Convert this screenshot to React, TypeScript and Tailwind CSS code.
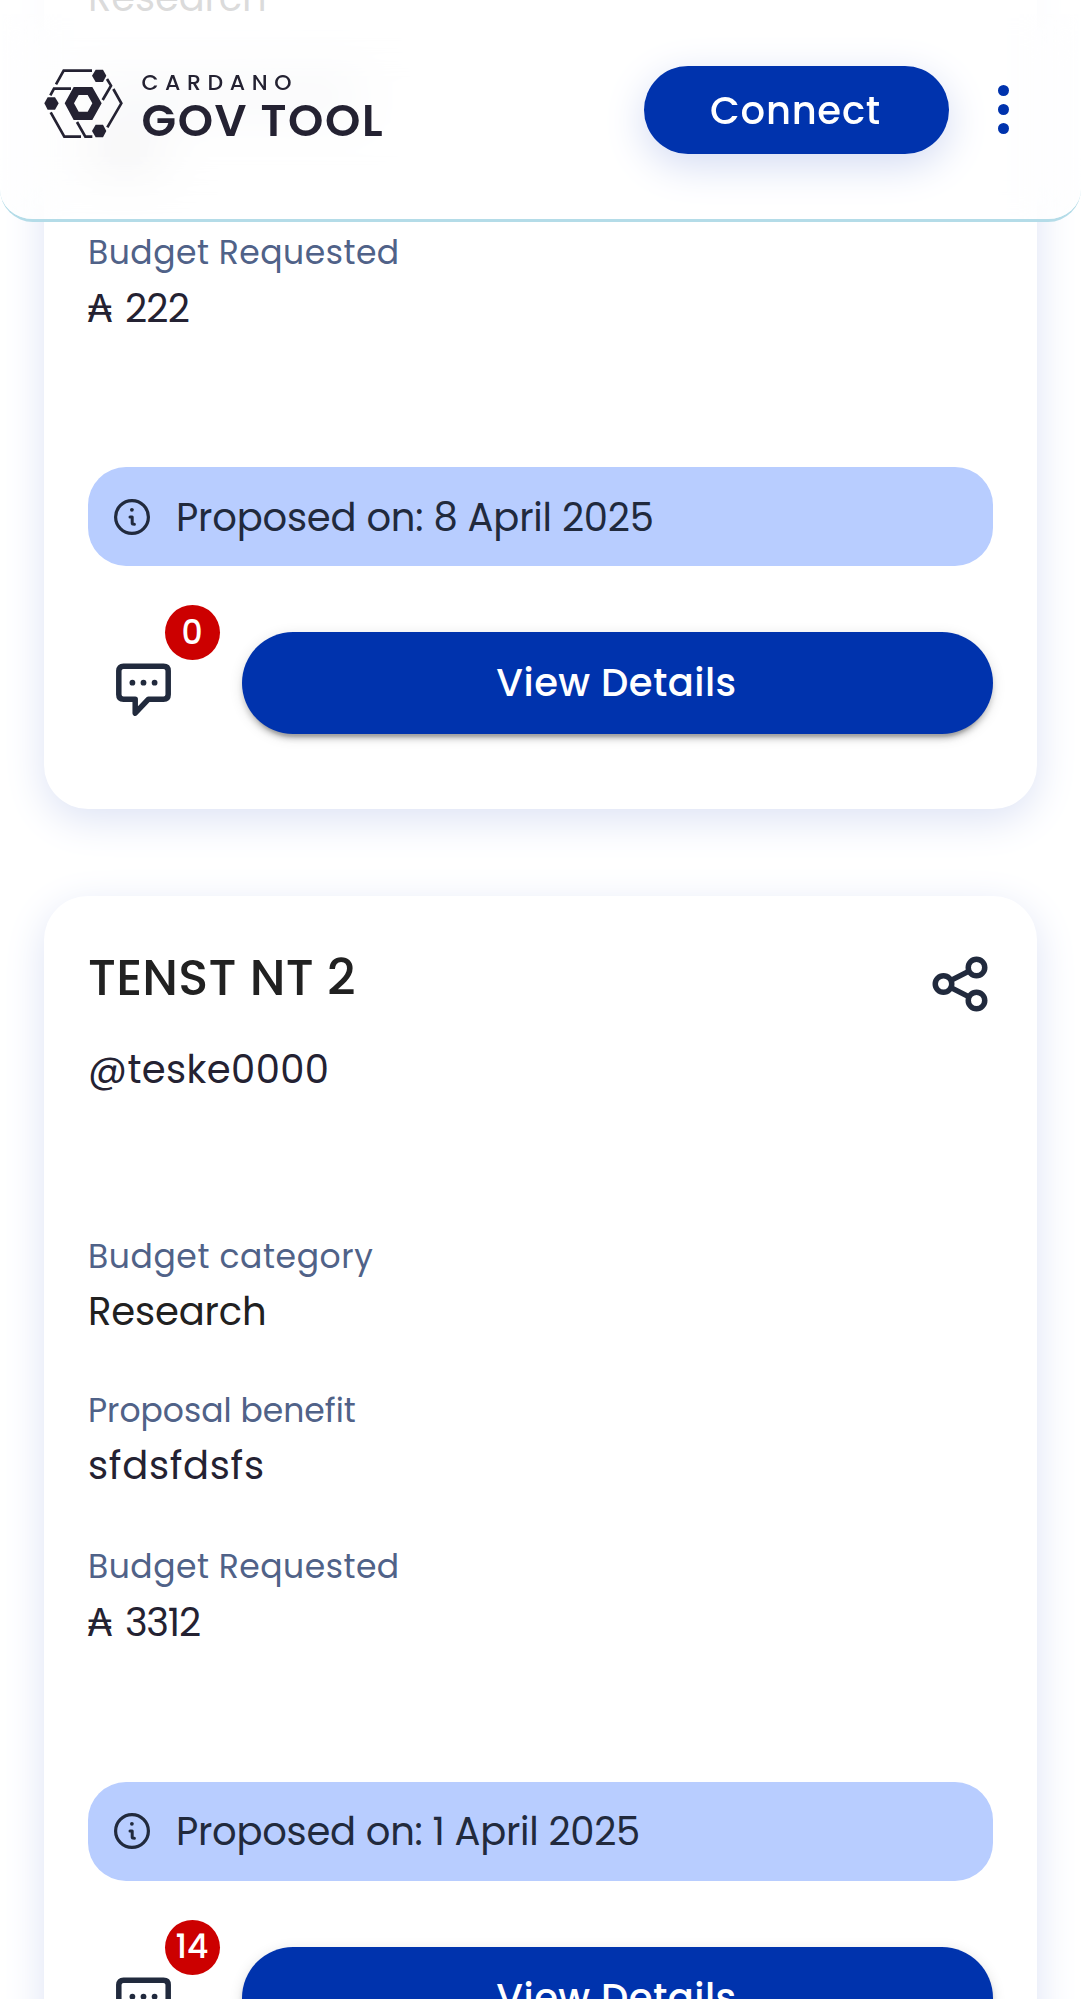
import type { ReactNode } from "react";

function LogoMark() {
  return (
    <svg width="79" height="69" viewBox="132 205 237 207" fill="none" stroke="#242232" strokeWidth="8">
      <path d="M168 251 191 210H276" />
      <path d="M321 235 333 255 308 298" />
      <path d="M340 265 364 308 322 380" />
      <path d="M151 284 162 264H213" />
      <path d="M152 335 193 408H243" />
      <path d="M231 364 256 408H277" />
      <g fill="#242232" stroke="none">
        <path d="M276 225 287 207H309L319 225 309 244H287Z" />
        <path d="M133 308 143 290H165L176 308 165 327H143Z" />
        <path d="M276 391 287 372H309L319 391 309 410H287Z" />
        <path
          fillRule="evenodd"
          d="M194 308 221 259H277L305 308 277 358H221ZM222 308 236 333H263L277 308 263 283H236Z"
        />
      </g>
    </svg>
  );
}

function InfoIcon() {
  return (
    <svg className="shrink-0" width="36" height="36" viewBox="0 0 36 36" fill="none" stroke="#212a3d">
      <circle cx="18" cy="18" r="16.4" strokeWidth="3.2" />
      <path d="M16 17.9H18.2V24.2Q18.2 25.2 20.4 25.2" strokeWidth="3" strokeLinecap="round" strokeLinejoin="round" />
      <circle cx="17.9" cy="10.8" r="1.9" fill="#212a3d" stroke="none" />
    </svg>
  );
}

function ChatIcon() {
  return (
    <svg width="55" height="54" viewBox="0 0 55 54" fill="none" stroke="#212a3d" strokeWidth="5.5" strokeLinejoin="round">
      <path d="M7.5 3.2H47.5Q52.2 3.2 52.2 7.8V31.5Q52.2 36.2 47.5 36.2H32.5L19.2 50.2V36.2H7.5Q2.8 36.2 2.8 31.5V7.8Q2.8 3.2 7.5 3.2Z" />
      <g fill="#212a3d" stroke="none">
        <circle cx="16.4" cy="19.7" r="2.9" />
        <circle cx="27.5" cy="19.7" r="2.9" />
        <circle cx="38.6" cy="19.7" r="2.9" />
      </g>
    </svg>
  );
}

function ShareIcon() {
  return (
    <svg width="66" height="66" viewBox="0 0 24 24" fill="none" stroke="#212a3d" strokeWidth="2">
      <circle cx="18" cy="6" r="3" />
      <circle cx="6" cy="12" r="3" />
      <circle cx="18" cy="18" r="3" />
      <path d="M8.7 10.7 15.3 7.3M8.7 13.3 15.3 16.7" />
    </svg>
  );
}

function Label({ className, children }: { className: string; children: ReactNode }) {
  return <div className={`h-[44px] text-[33px] leading-[44px] text-[#506288] ${className}`}>{children}</div>;
}

function Value({ className, children }: { className: string; children: ReactNode }) {
  return <div className={`h-[56px] text-[38.5px] leading-[56px] ${className}`}>{children}</div>;
}

type Proposal = {
  title: string;
  handle: string;
  benefit: string;
  amount: string;
  amountClass: string;
  date: string;
  dateClass: string;
  comments: string;
};

const proposals: Proposal[] = [
  {
    title: "TENST NT",
    handle: "@teske0000",
    benefit: "test",
    amount: "222",
    amountClass: "tracking-[-0.7px]",
    date: "8 April 2025",
    dateClass: "tracking-[-0.2px]",
    comments: "0",
  },
  {
    title: "TENST NT 2",
    handle: "@teske0000",
    benefit: "sfdsfdsfs",
    amount: "3312",
    amountClass: "tracking-[-1.2px]",
    date: "1 April 2025",
    dateClass: "tracking-[-0.27px]",
    comments: "14",
  },
];

function ProposalCard({ p }: { p: Proposal }) {
  return (
    <article className="h-[1227px] rounded-[44px] bg-white px-[44px] pt-[45px] shadow-[0_11px_41px_0_#dde3f5]">
      <div className="flex h-[76px] justify-between">
        <h2 className="mt-px h-[72px] text-[49.5px] leading-[72px] font-medium tracking-[0.25px] text-[#212121]">{p.title}</h2>
        <div className="mt-[9.5px]">
          <ShareIcon />
        </div>
      </div>
      <Value className="mt-[24.5px] tracking-[0.4px] text-[#242232]">{p.handle}</Value>

      <Label className="mt-[137.5px] tracking-[0.6px]">Budget category</Label>
      <Value className="mt-[5px] tracking-[-0.15px] text-[#212121]">Research</Value>

      <Label className="mt-[49px]">Proposal benefit</Label>
      <Value className="mt-[5px] tracking-[0.7px] text-[#242232]">{p.benefit}</Value>

      <Label className="mt-[51px] tracking-[0.5px]">Budget Requested</Label>
      <Value className="mt-[6px] -ml-px flex gap-[12px] text-[#242232]">
        <span className="font-['Inter',sans-serif] text-[37.5px]">₳</span>
        <span className={p.amountClass}>{p.amount}</span>
      </Value>

      <div className="mt-[130.7px] flex h-[99px] items-center gap-[26px] rounded-[38px] bg-[#b8cdff] pl-[26px] text-[38.5px] text-[#212a3d]">
        <InfoIcon />
        <span className={`mt-[2px] ${p.dateClass}`}>Proposed on: {p.date}</span>
      </div>

      <div className="mt-[66px] flex">
        <div className="relative w-[154px] shrink-0 pt-[30.5px] pl-[27.5px]">
          <ChatIcon />
          <span className="absolute -top-[27px] left-[77px] flex size-[55px] items-center justify-center rounded-full bg-[#cc0000] pr-px text-[33px] font-medium text-white">
            {p.comments}
          </span>
        </div>
        <button className="h-[102px] grow rounded-full bg-[#0033ad] pr-[2px] text-[38.5px] font-medium tracking-[0.46px] text-white shadow-[0_8px_3px_-5px_rgba(0,0,0,0.2),0_5.5px_5.5px_0_rgba(0,0,0,0.14),0_3px_14px_0_rgba(0,0,0,0.12)]">
          View Details
        </button>
      </div>
    </article>
  );
}

function Header() {
  return (
    <header className="absolute inset-x-0 top-0 h-[222px] overflow-hidden rounded-b-[33px] border-b-[3px] border-[#b4dce8] bg-white/60">
      <div className="absolute inset-x-0 top-0 h-[14px] bg-white/60" />
      <div className="absolute inset-x-0 top-[14px] bottom-0 bg-white/45 backdrop-blur-[26px]" />
      <div className="relative flex items-start pt-[65.5px] pl-[44px]">
        <div className="mt-[3.2px]">
          <LogoMark />
        </div>
        <div className="ml-[18.5px] grow text-[#242232]">
          <div className="mt-[5px] h-[24px] text-[22px] leading-[24px] font-medium tracking-[6.6px]">CARDANO</div>
          <div className="h-[52px] text-[45px] leading-[52px] font-semibold tracking-[1.6px]">GOV TOOL</div>
        </div>
        <button className="h-[88.5px] w-[305px] rounded-full bg-[#0033ad] pt-[2px] pr-[1.5px] text-[38.5px] font-medium tracking-[0.75px] text-white shadow-[0_11px_41px_0_#d3dbf3]">
          Connect
        </button>
        <div className="mt-[19.5px] mr-[72px] ml-[49.3px] flex flex-col gap-[8.2px]">
          <span className="size-[11px] rounded-full bg-[#0033ad]" />
          <span className="size-[11px] rounded-full bg-[#0033ad]" />
          <span className="size-[11px] rounded-full bg-[#0033ad]" />
        </div>
      </div>
    </header>
  );
}

export default function App() {
  return (
    <div className="relative h-[1999px] w-full overflow-hidden bg-white font-['Poppins','Inter',sans-serif]">
      <main className="-mt-[418.5px] flex flex-col gap-[87.5px] px-[44px]">
        {proposals.map((p) => (
          <ProposalCard key={p.title} p={p} />
        ))}
      </main>
      <Header />
    </div>
  );
}
